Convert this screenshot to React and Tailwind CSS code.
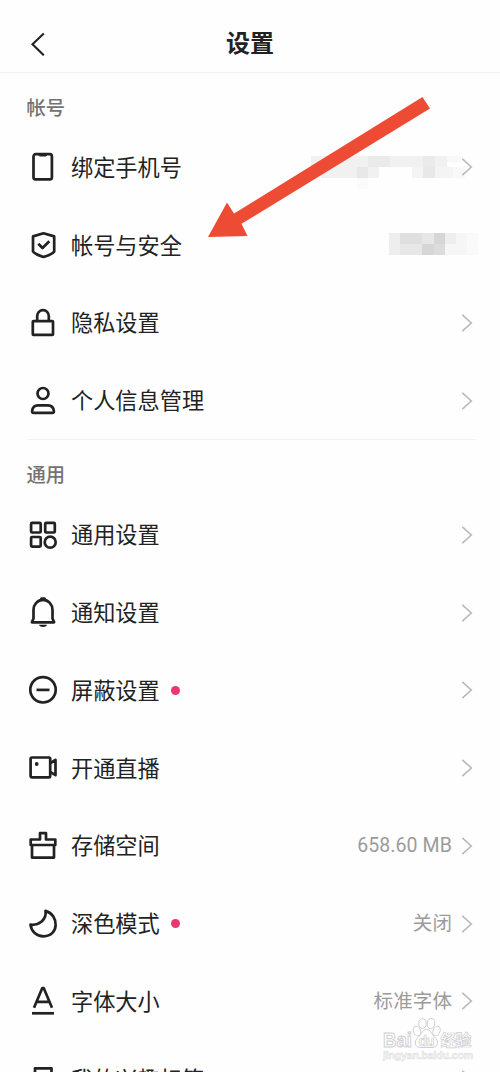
import React from "react";

const icons = {
  phone: (
    <>
      <rect x="5.5" y="2.2" width="18.4" height="25.2" rx="2.2" />
      <path d="M10.5 2.4h8.5l-1 1.6h-6.5z" fill="currentColor" strokeWidth="1" />
    </>
  ),
  shield: (
    <>
      <path d="M15.5 3.3 26.2 6.4V21.6Q24.2 24.3 15.5 27 6.8 24.3 5 21.6V6.4Z" />
      <path d="m10.3 13.7 4.2 4.3 6.8-6.7" />
    </>
  ),
  lock: (
    <>
      <rect x="4.8" y="13.1" width="20.2" height="13.8" rx="0.6" />
      <path d="M9.2 13V8a5.8 5.8 0 0 1 11.6 0v5" />
    </>
  ),
  person: (
    <>
      <circle cx="15" cy="7.5" r="5.5" />
      <path d="M10 19.4h10c3.4 0 5.5 2.3 5.900 5.700.1 1-.4 1.700-1.400 1.700h-19c-1 0-1.500-.7-1.400-1.700.4-3.400 2.500-5.700 5.900-5.700z" />
    </>
  ),
  grid: (
    <>
      <rect x="3.1" y="2.9" width="9.6" height="9.6" rx="1" />
      <rect x="17.2" y="2.9" width="9.6" height="9.6" rx="1" />
      <rect x="3.1" y="17" width="9.6" height="9.6" rx="1" />
      <circle cx="22.2" cy="22.2" r="5.5" />
    </>
  ),
  bell: (
    <>
      <path d="M5.5 20.500V12C5.500 6.500 9.500 1.800 15 1.800S24.500 6.500 24.500 12v8.500l1.600 3.800H3.900z" />
      <path d="M13.500 .5h3" strokeLinecap="round" />
      <path d="M11 26.800h8c-.7 3-7.300 3-8 0z" fill="currentColor" stroke="none" />
    </>
  ),
  minus: (
    <>
      <circle cx="15" cy="14.8" r="12.7" />
      <path d="M8.5 14.9h13" />
    </>
  ),
  video: (
    <>
      <rect x="2.6" y="4.500" width="19.600" height="19.800" rx="1.200" />
      <path d="m22.500 10 5-3v15.200l-5-3" />
      <circle cx="8.700" cy="11" r="1.900" fill="currentColor" stroke="none" />
    </>
  ),
  storage: (
    <>
      <path d="M2.700 14V8.500h9.300V2.200h6v6.300h9.300V14z" />
      <path d="M4 14v12.600h22V14" />
    </>
  ),
  moon: (
    <path d="M17.500 1.900C31.500 6 31.200 27.200 15.500 27.300 8.500 27.300 3.200 22.400 2.500 15.700 11 16.500 18.800 11 17.500 1.900Z" />
  ),
  font: (
    <>
      <path d="m6 21.800 8.200-19.600h1.600L24 21.800M8.900 15.800h12.200" />
      <path d="M4 27.300h22" />
    </>
  ),
  tag: <path d="M7 27V4.300h16.500V27l-8.200-5z" />,
};

function Icon({ name }) {
  return (
    <svg
      viewBox="0 0 30 30"
      className="h-[30px] w-[30px] shrink-0 overflow-visible"
      fill="none"
      stroke="currentColor"
      strokeWidth="2.7"
      strokeLinejoin="round"
    >
      {icons[name]}
    </svg>
  );
}

function Chevron({ hidden }) {
  return (
    <svg
      viewBox="0 0 12 20"
      className={hidden ? "invisible h-5 w-3 shrink-0" : "h-5 w-3 shrink-0"}
      fill="none"
      stroke="#b9b9b9"
      strokeWidth="1.6"
    >
      <path d="m1.3 1.8 9 8.200-9 8.200" />
    </svg>
  );
}

function PhoneMask() {
  return (
    <svg viewBox="0 0 158 44" className="h-11 w-[158px]" shapeRendering="crispEdges">
      <path fill="#f1f1f1" d="M0 0h136v11H0z" />
      <path fill="#eaeaea" d="M57 0h22v11H57zM112 0h12v11h-12z" />
      <path fill="#f8f8f8" d="M136 0h14v6h-14z" />
      <path fill="#f1f1f1" d="M10 11h58v11H10z" />
      <path fill="#e8e8e8" d="M46 11h11v11H46zM112 11h12v11h-12z" />
      <path fill="#f4f4f4" d="M101 11h11v11h-11zM124 11h18v11h-18z" />
      <path fill="#f8f8f8" d="M142 11h12v11h-12z" />
      <path fill="#fbfbfb" d="M46 22h11v11H46z" />
    </svg>
  );
}

function AccountMask() {
  return (
    <svg viewBox="0 0 89 22" className="h-[22px] w-[89px]" shapeRendering="crispEdges">
      <path fill="#eeeeee" d="M0 0h11v22H0z" />
      <path fill="#dfdfdf" d="M11 0h22v11H11z" />
      <path fill="#e7e7e7" d="M11 11h22v11H11zM33 0h12v11H33z" />
      <path fill="#d6d6d6" d="M45 0h11v11H45zM33 11h12v11H33z" />
      <path fill="#dcdcdc" d="M45 11h11v11H45z" />
      <path fill="#eeeeee" d="M56 0h11v11H56z" />
      <path fill="#f6f6f6" d="M56 11h22v11H56zM67 0h11v11H67z" />
      <path fill="#fafafa" d="M78 0h11v22H78z" />
    </svg>
  );
}

function Row({ icon, label, dot, value, mask, maskClass, hideChevron }) {
  return (
    <div className="relative flex h-[77.75px] items-center pr-[27px] pl-7">
      <Icon name={icon} />
      <span className="ml-[13px] pb-[3px] text-[22.2px] leading-[30px] whitespace-nowrap">{label}</span>
      {dot && <span className="ml-[11px] h-[9px] w-[9px] rounded-full bg-[#e8386d]" />}
      {mask && <span className={maskClass}>{mask}</span>}
      <span className="relative ml-auto flex items-center gap-[9px]">
        {value && (
          <span className="pt-px font-[Roboto,'Noto_Sans_CJK_SC',sans-serif] text-[19.5px] leading-[28px] tracking-[0.1px] text-[#9b9b9b]">
            {value}
          </span>
        )}
        <Chevron hidden={hideChevron} />
      </span>
    </div>
  );
}

function Watermark() {
  return (
    <svg
      viewBox="0 0 100 50"
      className="absolute top-[1014px] left-[380px] h-[50px] w-[100px]"
      fill="#fff"
      stroke="#cfcfcf"
      strokeWidth="1"
      fontFamily="Liberation Sans, Noto Sans CJK SC, sans-serif"
      fontWeight="700"
    >
      <ellipse cx="37" cy="17" rx="3.6" ry="5" transform="rotate(-20 37 17)" />
      <ellipse cx="42.5" cy="9.5" rx="3.8" ry="5" />
      <ellipse cx="51" cy="9.5" rx="3.8" ry="5" transform="rotate(10 51 9.5)" />
      <ellipse cx="56.5" cy="17" rx="3.5" ry="5" transform="rotate(20 56.5 17)" />
      <path d="M46.5 15.500c4 0 5 4.500 8 7.500 5 4 3.500 10.500-2 10.500h-12c-6 0-7-6.500-2-10.500 3-3 4-7.500 8-7.500z" />
      <text x="3" y="32.5" fontSize="20" textLength="29" lengthAdjust="spacingAndGlyphs">Bai</text>
      <text x="38.5" y="31.5" fontSize="14" textLength="16" strokeWidth="0.7">du</text>
      <text x="60.5" y="32" fontSize="16" textLength="31" strokeWidth="0.7">经验</text>
      <text x="3" y="44.5" fontSize="10.5" textLength="90" fill="#f4f4f4" stroke="#dedede" strokeWidth="0.5">jingyan.baidu.com</text>
    </svg>
  );
}

export default function App() {
  return (
    <div className="relative h-[1072px] w-[500px] overflow-hidden bg-[#fefefe] font-['Noto_Sans_CJK_SC',sans-serif] text-[#222]">
      <header className="grid h-[73px] grid-cols-3 items-center border-b border-[#f3f3f3] pt-[14px] pr-7 pl-7">
        <svg viewBox="0 0 18 24" className="mt-px h-6 w-[18px]" fill="none" stroke="#222" strokeWidth="2.1">
          <path d="M15.8 1.5 4.5 12.3l11.3 11" />
        </svg>
        <h1 className="pb-[2px] text-center text-[24px] leading-[34px] font-bold">设置</h1>
      </header>

      <section>
        <h2 className="flex h-[55.5px] items-center pt-[12px] pl-[26.5px] text-[19.3px] leading-[28px] font-medium text-[#737373]">帐号</h2>
        <Row icon="phone" label="绑定手机号" mask={<PhoneMask />} maskClass="absolute top-[27px] left-[311px]" />
        <Row
          icon="shield"
          label="帐号与安全"
          hideChevron
          mask={<AccountMask />}
          maskClass="absolute top-[27px] left-[389px]"
        />
        <Row icon="lock" label="隐私设置" />
        <Row icon="person" label="个人信息管理" />
      </section>

      <div className="-mt-px mr-6 ml-[27px] h-px bg-[#f3f3f3]" />

      <section>
        <h2 className="flex h-[56.5px] items-center pt-[12px] pl-[26.5px] text-[19.3px] leading-[28px] font-medium text-[#737373]">通用</h2>
        <Row icon="grid" label="通用设置" />
        <Row icon="bell" label="通知设置" />
        <Row icon="minus" label="屏蔽设置" dot />
        <Row icon="video" label="开通直播" />
        <Row icon="storage" label="存储空间" value="658.60 MB" />
        <Row icon="moon" label="深色模式" dot value="关闭" />
        <Row icon="font" label="字体大小" value="标准字体" />
        <Row icon="tag" label="我的兴趣标签" />
      </section>

      <svg viewBox="0 0 222 144" className="absolute top-[95px] left-[208px] h-[144px] w-[222px]">
        <path
          d="M214.5 2 222 13.5 33.5 128.8 39.5 141 0 142 19 107.5 26 118.5Z"
          fill="#ee4b35"
        />
      </svg>
      <Watermark />
    </div>
  );
}
